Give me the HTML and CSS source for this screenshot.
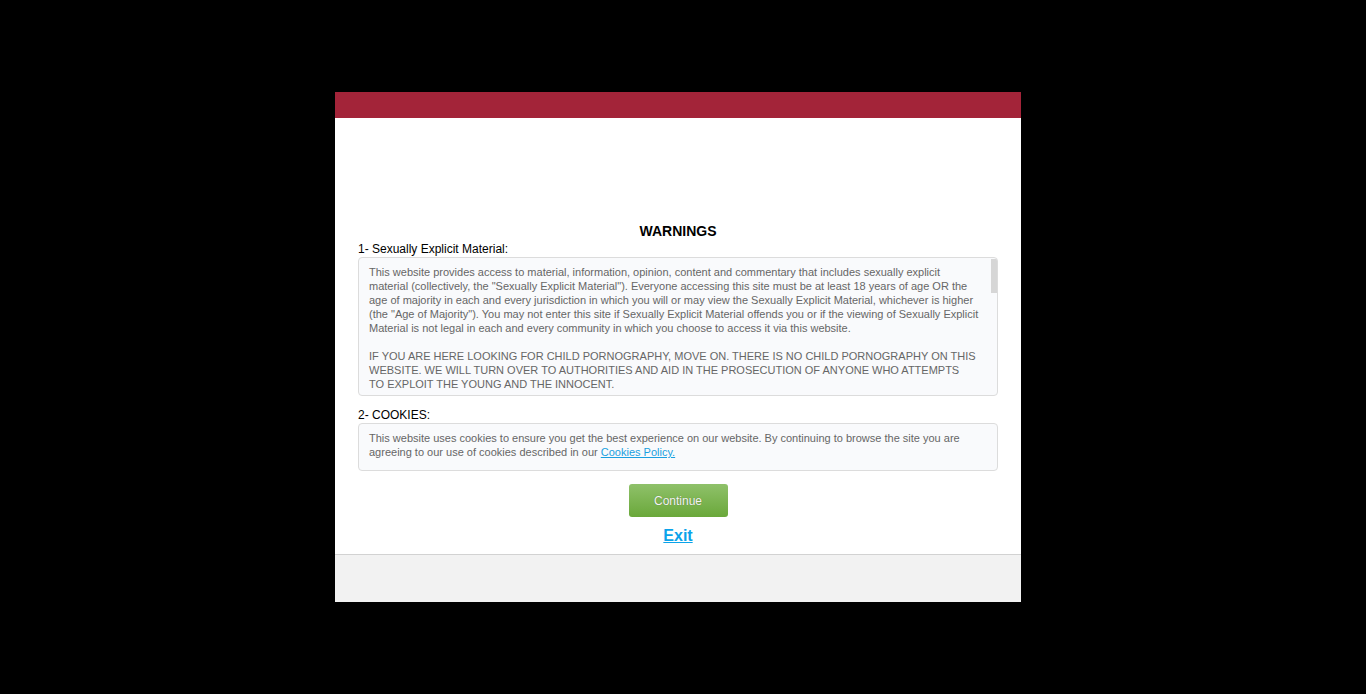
FILE: index.html
```html
<!DOCTYPE html>
<html>
<head>
<meta charset="utf-8">
<link rel="stylesheet" href="styles.css">
</head>
<body>
<div class="modal">
  <div class="modal-bar"></div>
  <div class="modal-body">
    <h2 class="title">WARNINGS</h2>
    <div class="label">1- Sexually Explicit Material:</div>
    <div class="box box-scroll">
      <div class="box-inner">
        <p>This website provides access to material, information, opinion, content and commentary that includes sexually explicit material (collectively, the "Sexually Explicit Material"). Everyone accessing this site must be at least 18 years of age OR the age of majority in each and every jurisdiction in which you will or may view the Sexually Explicit Material, whichever is higher (the "Age of Majority"). You may not enter this site if Sexually Explicit Material offends you or if the viewing of Sexually Explicit Material is not legal in each and every community in which you choose to access it via this website.</p>
        <p class="caps">IF YOU ARE HERE LOOKING FOR CHILD PORNOGRAPHY, MOVE ON. THERE IS NO CHILD PORNOGRAPHY ON THIS WEBSITE. WE WILL TURN OVER TO AUTHORITIES AND AID IN THE PROSECUTION OF ANYONE WHO ATTEMPTS TO EXPLOIT THE YOUNG AND THE INNOCENT.</p>
      </div>
      <div class="scroll-thumb"></div>
    </div>
    <div class="label label-2">2- COOKIES:</div>
    <div class="box box-cookies">
      <p>This website uses cookies to ensure you get the best experience on our website. By continuing to browse the site you are agreeing to our use of cookies described in our <a href="#" class="link">Cookies Policy.</a></p>
    </div>
    <div class="actions">
      <button class="btn-continue">Continue</button>
      <a href="#" class="exit">Exit</a>
    </div>
  </div>
  <div class="modal-footer"></div>
</div>
</body>
</html>
```

FILE: styles.css
```css
html, body {
  margin: 0;
  padding: 0;
  background: #000;
  height: 100%;
}
body {
  padding-right: 10px;
  font-family: "Liberation Sans", Arial, sans-serif;
  overflow: hidden;
}
.modal {
  width: 686px;
  margin: 92px auto 0;
  background: #fff;
}
.modal-bar {
  height: 26px;
  background: #a32439;
}
.modal-body {
  padding: 105px 23px 8px;
}
.title {
  margin: 0;
  font-size: 14px;
  line-height: 16px;
  font-weight: bold;
  text-align: center;
  color: #000;
}
.label {
  margin-top: 3px;
  font-size: 12px;
  line-height: 15px;
  color: #000;
}
.label-2 {
  margin-top: 12px;
}
.box {
  border: 1px solid #dcdcdc;
  border-radius: 4px;
  background: #f9fafc;
  color: #666;
  font-size: 11px;
  line-height: 14px;
}
.box p {
  margin: 0;
}
.box-scroll {
  position: relative;
  height: 137px;
  overflow: hidden;
}
.box-inner {
  width: 610px;
  padding: 7px 0 0 10px;
}
.box-inner p + p {
  margin-top: 14px;
}
.box-inner .caps {
  max-width: 607px;
}
.scroll-thumb {
  position: absolute;
  top: 1px;
  right: 0;
  width: 6px;
  height: 34px;
  background: #d6d6d6;
}
.box-cookies {
  padding: 7px 10px 11px;
}
.link {
  color: #1a9fe0;
  text-decoration: underline;
}
.actions {
  display: flex;
  flex-direction: column;
  align-items: center;
  margin-top: 13px;
}
.btn-continue {
  width: 99px;
  height: 33px;
  border: none;
  border-radius: 3px;
  background: linear-gradient(#8fc16a, #6aa83a);
  color: #f4f4f4;
  font-family: "Liberation Sans", Arial, sans-serif;
  font-size: 12px;
  text-shadow: 0 0 1px rgba(0,0,0,0.35);
  cursor: pointer;
}
.exit {
  margin-top: 9px;
  font-size: 16px;
  line-height: 20px;
  font-weight: bold;
  color: #0aa3ea;
  text-decoration: underline;
}
.modal-footer {
  height: 47px;
  background: #f2f2f2;
  border-top: 1px solid #d2d2d2;
}
```
